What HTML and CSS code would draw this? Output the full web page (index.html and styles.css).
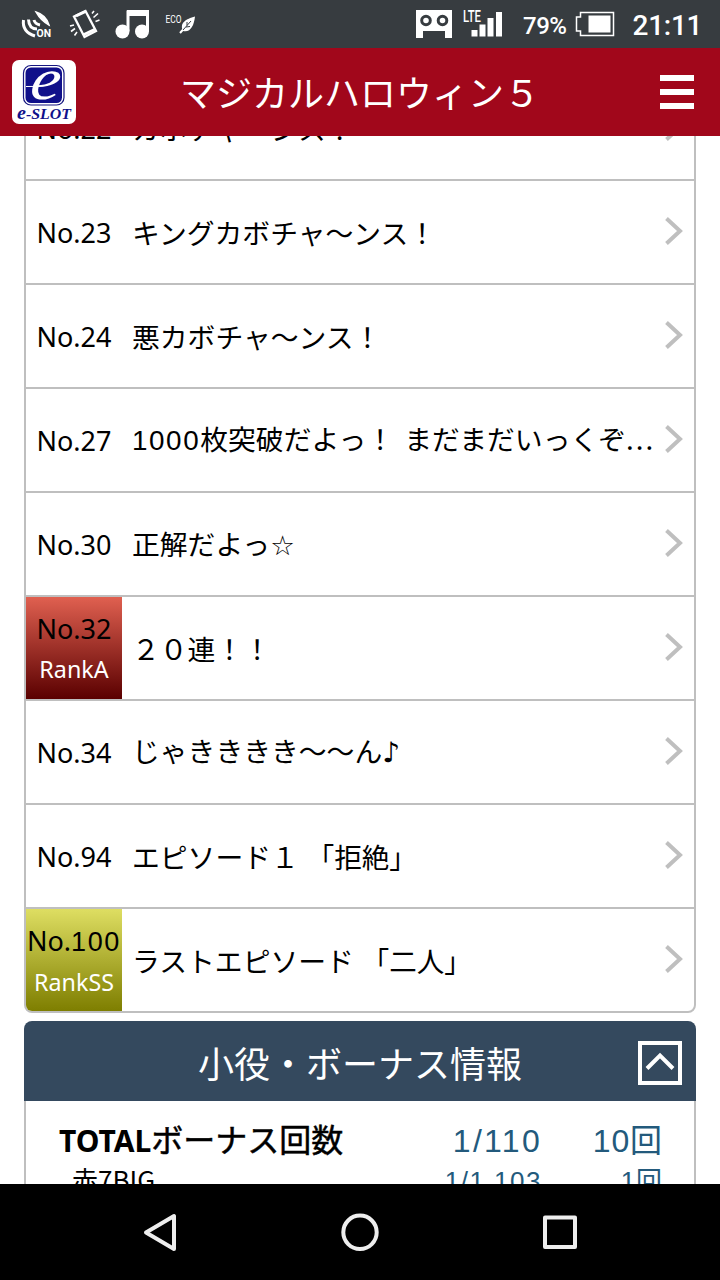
FILE: index.html
```html
<!DOCTYPE html>
<html lang="ja">
<head>
    <meta charset="UTF-8">
    <meta name="viewport" content="width=device-width, initial-scale=1.0">
    <title>マジカルハロウィン５</title>
    <link rel="stylesheet" href="styles.css">
</head>
<body>
    <div class="status">
        <svg class="status-icons" width="220" height="48" viewBox="0 0 220 48" fill="none" stroke="#fff">
            <path d="M36 12 Q46 15 49 25 Q41 21 36 12Z" fill="#fff" stroke-width="1.5"/>
            <path d="M23.500 20 Q22 32 35 36" stroke-width="3"/>
            <path d="M28.500 19.500 Q29 29 37 29" stroke-width="3"/>
            <path d="M34 20 Q35 24 40 25" stroke-width="3"/>
            <text class="icon-text" x="36.500" y="37" font-size="10.500" font-weight="bold" textLength="14.500" lengthAdjust="spacingAndGlyphs">ON</text>
            <path d="M74 16.500 L85.500 11 L96 31 L84.500 37Z" stroke-width="2.300"/>
            <path d="M76 16 L85.500 11.500 M83 35 L94.500 29.500" stroke-width="3"/>
            <path d="M92 13.500 L94 11 M93.500 17.500 L98 13.500 M95.500 21.500 L99.500 20 M70 26 L74 25 M71 31.500 L75 28.500 M74.500 35.500 L77 32" stroke-width="1.600"/>
            <path d="M128 31 V12 H147.500 V31" stroke-width="3"/>
            <path d="M127 10 H149 V16 H127Z" fill="#fff" stroke="none"/>
            <circle cx="122.500" cy="31.500" r="7" fill="#fff" stroke="none"/>
            <circle cx="142" cy="31.500" r="7" fill="#fff" stroke="none"/>
            <text class="icon-text" x="165.500" y="23" font-size="10.500" textLength="16" lengthAdjust="spacingAndGlyphs">ECO</text>
            <path d="M183 31 C179 23 186 19 195 16.500 C194 26 190 33 183 31Z" fill="#fff" stroke="none"/>
            <path d="M180 33 L184 28.500" stroke-width="2"/>
            <path d="M183 30 L191 21 M187 25.500 V22 M186 27 L190 26.500" stroke="#373c40" stroke-width="1"/>
        </svg>
        <svg class="status-icons" width="320" height="48" viewBox="400 0 320 48" fill="none" stroke="#fff">
            <path d="M416 10 H452 V38 H445 V31 H423 V38 H416Z" fill="#fff" stroke="none"/>
            <circle cx="426" cy="20.500" r="4.300" stroke="#373c40" stroke-width="3"/>
            <circle cx="442.500" cy="20.500" r="4.300" stroke="#373c40" stroke-width="3"/>
            <text class="icon-text" x="463" y="21.500" font-size="16" font-weight="500" textLength="18" lengthAdjust="spacingAndGlyphs">LTE</text>
            <path d="M471.500 30 H477.500 V36.500 H471.500Z M479.500 24.500 H485.500 V36.500 H479.500Z M487.500 18 H493.500 V36.500 H487.500Z M496 12 H502 V36.500 H496Z" fill="#fff" stroke="none"/>
            <text class="icon-text" x="523" y="33.500" font-size="24" font-weight="500" textLength="44">79%</text>
            <path d="M580.500 12.500 H613.500 V35.500 H580.500 V31 H576.500 V17 H580.500Z" stroke-width="1.500"/>
            <path d="M588.500 15.500 H610.500 V32.500 H588.500Z" fill="#fff" stroke="none"/>
            <text class="icon-text" x="632.500" y="35" font-size="28" font-weight="500" textLength="70">21:11</text>
        </svg>
    </div>

    <header class="header">
        <svg class="logo" width="64" height="64" viewBox="0 0 64 64">
            <rect width="64" height="64" rx="7" fill="#fff"/>
            <rect x="11.500" y="5.500" width="40.500" height="39.500" rx="7.500" fill="#fff" stroke="#171780" stroke-width="1.200"/>
            <rect x="13.500" y="7.500" width="36.500" height="35.500" rx="5.500" fill="#10108a"/>
            <path d="M14 26.500 Q26 27 36 25" fill="none" stroke="#fff" stroke-width="1"/>
            <text class="logo-e" x="0" y="0" transform="translate(17 38.500) scale(1.150 1) skewX(-6)">e</text>
            <text class="logo-text" x="5" y="59" textLength="54" lengthAdjust="spacingAndGlyphs"><tspan font-size="19">e</tspan>-SLOT</text>
        </svg>
        <h1>マジカルハロウィン５</h1>
        <div class="menu"><span></span><span></span><span></span></div>
    </header>

    <main>
        <ul class="list">
            <li><div class="num"><p>No.22</p></div><p class="name">カボチャ～ンス！</p><svg class="arrow" viewBox="0 0 18 28"><path d="M1.500 1.500 L15 14 L1.500 26.500"/></svg></li>
            <li><div class="num"><p>No.23</p></div><p class="name">キングカボチャ～ンス！</p><svg class="arrow" viewBox="0 0 18 28"><path d="M1.500 1.500 L15 14 L1.500 26.500"/></svg></li>
            <li><div class="num"><p>No.24</p></div><p class="name">悪カボチャ～ンス！</p><svg class="arrow" viewBox="0 0 18 28"><path d="M1.500 1.500 L15 14 L1.500 26.500"/></svg></li>
            <li><div class="num"><p>No.27</p></div><p class="name long"><span class="wide">1000</span>枚突破だよっ！ まだまだいっくぞ<span class="dots">...</span></p><svg class="arrow" viewBox="0 0 18 28"><path d="M1.500 1.500 L15 14 L1.500 26.500"/></svg></li>
            <li><div class="num"><p>No.30</p></div><p class="name">正解だよっ<span class="star">☆</span></p><svg class="arrow" viewBox="0 0 18 28"><path d="M1.500 1.500 L15 14 L1.500 26.500"/></svg></li>
            <li><div class="num rank-a"><p>No.32</p><p class="rank">RankA</p></div><p class="name">２０連！！</p><svg class="arrow" viewBox="0 0 18 28"><path d="M1.500 1.500 L15 14 L1.500 26.500"/></svg></li>
            <li><div class="num"><p>No.34</p></div><p class="name">じゃきききき～～ん<span class="note">♪</span></p><svg class="arrow" viewBox="0 0 18 28"><path d="M1.500 1.500 L15 14 L1.500 26.500"/></svg></li>
            <li><div class="num"><p>No.94</p></div><p class="name">エピソード１<span class="quote">「拒絶」</span></p><svg class="arrow" viewBox="0 0 18 28"><path d="M1.500 1.500 L15 14 L1.500 26.500"/></svg></li>
            <li><div class="num rank-ss"><p>No.<span class="wide">100</span></p><p class="rank">RankSS</p></div><p class="name">ラストエピソード<span class="quote">「二人」</span></p><svg class="arrow" viewBox="0 0 18 28"><path d="M1.500 1.500 L15 14 L1.500 26.500"/></svg></li>
        </ul>

        <section class="bonus">
            <div class="bonus-title">
                <h2>小役・ボーナス情報</h2>
                <svg class="toggle" viewBox="0 0 44 44"><path d="M2 2 H42 V42 H2Z M9 27.500 L22 14.500 L35 27.500"/></svg>
            </div>
            <div class="bonus-body">
                <div class="total"><p><b>TOTAL</b>ボーナス回数</p><p class="rate">1/110</p><p class="count">10<i>回</i></p></div>
                <div class="detail"><p>赤7BIG</p><p class="rate">1/1,103</p><p class="count">1<i>回</i></p></div>
            </div>
        </section>
    </main>

    <nav class="nav">
        <svg width="40" height="40" viewBox="0 0 40 40"><path d="M6 20.500 L34 4 V37Z"/></svg>
        <svg width="40" height="40" viewBox="0 0 40 40"><circle cx="20" cy="20.300" r="16.700"/></svg>
        <svg width="40" height="40" viewBox="0 0 40 40"><path d="M5 5.500 H35 V35 H5Z"/></svg>
    </nav>
</body>
</html>
```

FILE: styles.css
```css
body {
    font-family: 'Noto Sans', 'Noto Sans CJK JP', sans-serif;
    margin: 0;
    height: 1280px;
    display: flex;
    flex-direction: column;
    background: #fff;
    color: #000;
    overflow: hidden;
}

h1, h2, p, ul {
    margin: 0;
    padding: 0;
    font-weight: normal;
}

i {
    font-style: normal;
}

/* ステータスバー */
.status {
    height: 48px;
    display: flex;
    justify-content: space-between;
    background: #373c40;
}

.status-icons {
    display: block;
}

.icon-text {
    font-family: Roboto, sans-serif;
    fill: #fff;
    stroke: none;
}

/* ヘッダー */
.header {
    height: 88px;
    box-sizing: border-box;
    padding: 0 26px 0 12px;
    display: flex;
    align-items: center;
    justify-content: space-between;
    background: #a1071b;
    color: #fff;
    flex-shrink: 0;
}

.header h1 {
    font-family: 'Noto Sans CJK JP', sans-serif;
    font-size: 36px;
    line-height: 48px;
    padding: 0 16px 2px 0;
}

.logo-e {
    font: italic 59px 'Liberation Serif', serif;
    fill: #fff;
}

.logo-text {
    font: italic bold 15px 'Liberation Serif', serif;
    fill: #10108a;
}

.menu {
    width: 34px;
    padding-bottom: 1px;
    display: flex;
    flex-direction: column;
    gap: 8px;
}

.menu span {
    height: 6px;
    background: #fff;
}

main {
    height: 1048px;
    overflow: hidden;
}

/* 一覧 */
.list {
    margin: -61px 24px 0;
    list-style: none;
    border: 2px solid #bfbfbf;
    border-radius: 8px;
    overflow: hidden;
}

.list li {
    height: 102px;
    display: flex;
    align-items: center;
    border-bottom: 2px solid #bfbfbf;
}

.list li:last-child {
    border-bottom: none;
}

.num {
    width: 96px;
    height: 102px;
    display: flex;
    flex-direction: column;
    justify-content: center;
    align-items: center;
    flex-shrink: 0;
    font-size: 27px;
    line-height: 40px;
    white-space: nowrap;
}

.num p:first-child {
    padding-top: 2px;
}

.num .rank {
    font-size: 23.3px;
    line-height: 40px;
    color: #fff;
}

.rank-a {
    background: linear-gradient(#e06050, #5a0000);
}

.rank-ss {
    background: linear-gradient(#dede62, #7e7e00);
}

.wide {
    font-family: 'Liberation Sans', sans-serif;
    letter-spacing: 1.6px;
}

.name {
    font-family: 'Noto Sans CJK JP', sans-serif;
    width: 533px;
    padding: 0 0 1px 10px;
    font-size: 27.8px;
    line-height: 42px;
    white-space: nowrap;
}

.long {
    word-spacing: 4px;
}

.dots {
    letter-spacing: 2px;
}

.star {
    font-family: 'DejaVu Sans', sans-serif;
    font-size: 27.5px;
}

.note {
    font-family: 'DejaVu Sans', sans-serif;
    font-size: 28px;
}

.quote {
    margin-left: 8px;
    font-size: 27.5px;
}

.arrow {
    width: 18px;
    height: 28px;
    padding-bottom: 2px;
    fill: none;
    stroke: #bfbfbf;
    stroke-width: 4;
}

/* 小役・ボーナス */
.bonus {
    margin: 8px 24px 0;
}

.bonus-title {
    height: 80px;
    box-sizing: border-box;
    padding: 4px 14px 0 58px;
    display: flex;
    justify-content: space-between;
    align-items: center;
    background: #34495e;
    border-radius: 8px 8px 0 0;
    color: #fff;
}

.bonus-title h2 {
    flex: 1;
    font-family: 'Noto Sans CJK JP', sans-serif;
    font-size: 36px;
    line-height: 48px;
    padding-bottom: 2px;
    text-align: center;
}

.toggle {
    width: 44px;
    height: 44px;
    fill: none;
    stroke: #fff;
    stroke-width: 4;
}

.bonus-body {
    height: 300px;
    padding: 15px 32px 0 33px;
    border: 2px solid #bfbfbf;
    border-top: none;
}

.total, .detail {
    display: flex;
    align-items: baseline;
    font-family: 'Noto Sans CJK JP', sans-serif;
    line-height: 44px;
    white-space: nowrap;
}

.total {
    font-size: 32px;
}

.total p:first-child {
    -webkit-text-stroke: 0.5px #000;
}

.total b {
    font-family: 'Noto Sans', sans-serif;
    font-size: 30px;
    -webkit-text-stroke: 0;
}

.detail {
    font-size: 26px;
    line-height: 32px;
}

.detail p:first-child {
    padding-left: 13px;
}

.rate, .count {
    font-family: 'Liberation Sans', 'Noto Sans CJK JP', sans-serif;
    color: #235a7c;
    letter-spacing: 1.5px;
    text-align: right;
}

.rate {
    flex: 1;
}

.total .rate {
    letter-spacing: 2.3px;
}

.count {
    width: 120px;
    letter-spacing: 0.8px;
}

.count i {
    font-family: 'Noto Sans CJK JP', sans-serif;
    letter-spacing: 0;
}

/* ナビゲーション */
.nav {
    height: 96px;
    display: flex;
    justify-content: center;
    align-items: center;
    gap: 160px;
    background: #000;
}

.nav svg {
    fill: none;
    stroke: #eee;
    stroke-width: 4;
    stroke-linejoin: round;
}
```
